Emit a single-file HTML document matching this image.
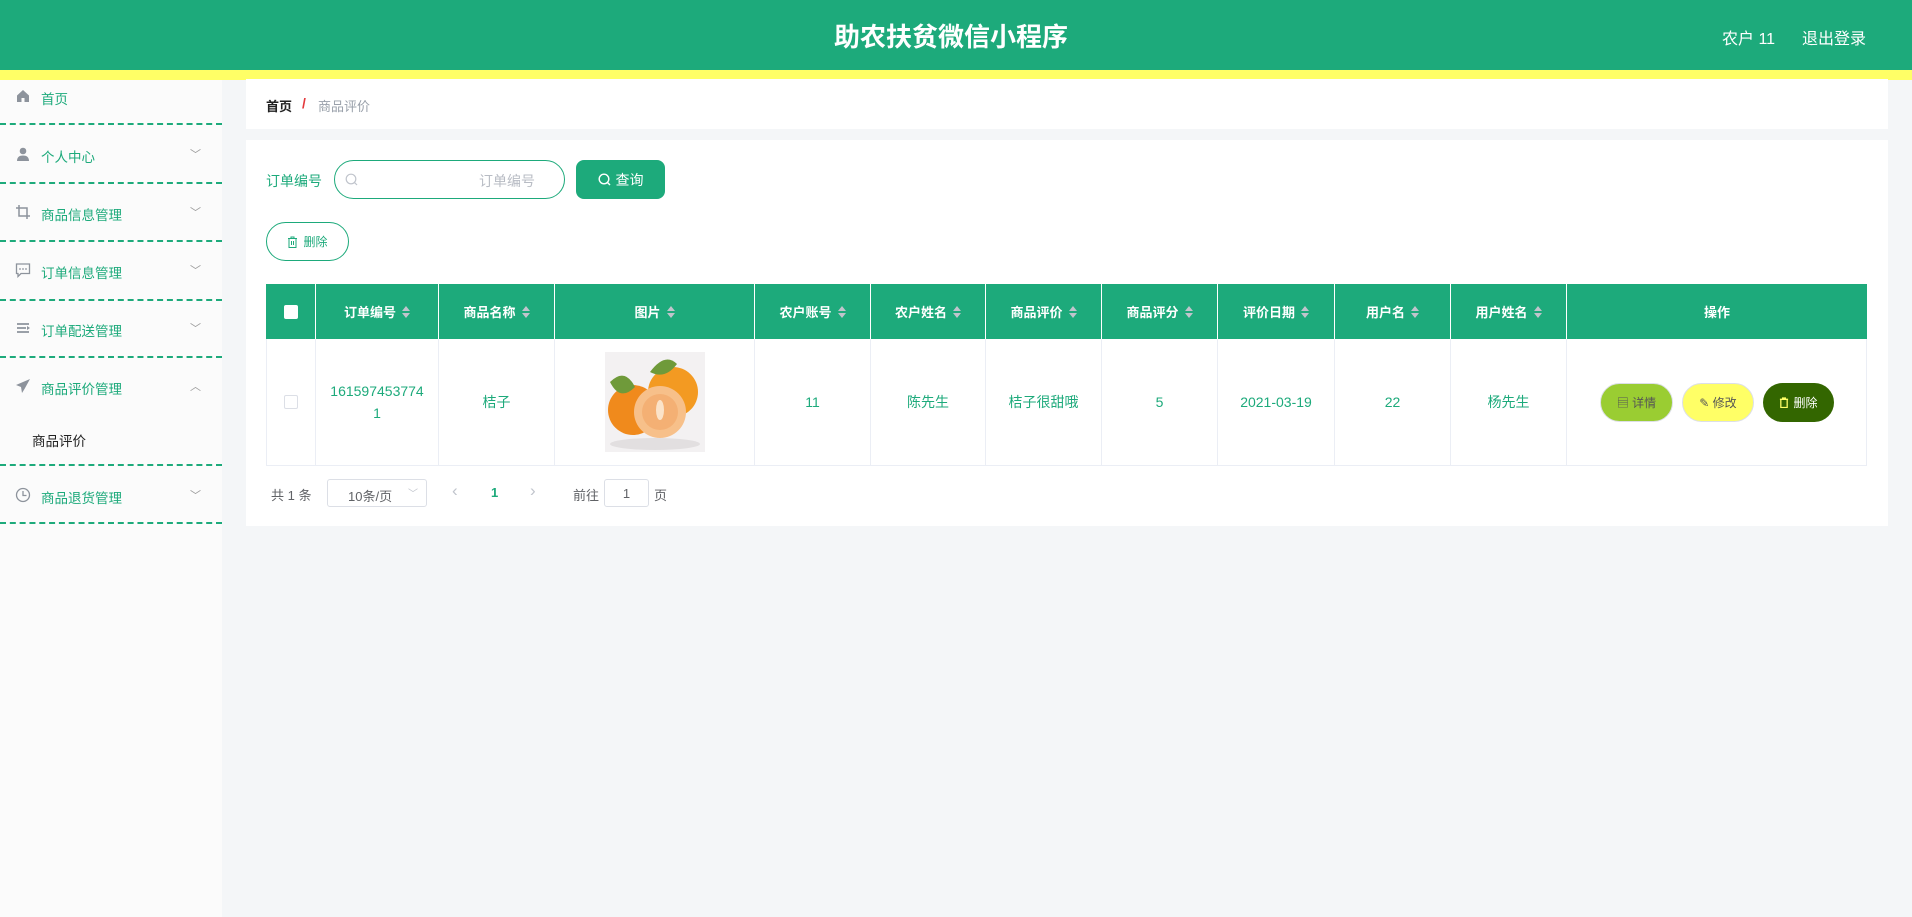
<!DOCTYPE html>
<html><head><meta charset="utf-8">
<style>
*{box-sizing:border-box;margin:0;padding:0}
body{width:1912px;height:917px;background:#f4f6f8;font-family:"Liberation Sans","Noto Sans CJK SC",sans-serif;position:relative;overflow:hidden}
.a{position:absolute}
.hdr{left:0;top:0;width:1912px;height:70px;background:#1daa7b}
.yl{left:0;top:70px;width:1912px;height:10px;background:#ffff66}
.side{left:0;top:80px;width:222px;height:837px;background:#fbfbfb}
.mi{position:absolute;left:0;width:222px;color:#1daa7b;font-size:13.5px}
.mi .t{position:absolute;left:41px}
.mi svg.ic{position:absolute;left:15px}
.mi .ch{position:absolute;left:190px;color:#999;font-size:11px}
.dl{position:absolute;left:0;width:222px;border-top:2px dashed #1daa7b}
.panel{background:#fff}
.th{position:absolute;top:284px;height:55px;background:#1daa7b;color:#fff;font-weight:bold;font-size:13px;display:flex;align-items:center;justify-content:center;border-right:1px solid #fff}
.td{position:absolute;top:339px;height:127px;border-right:1px solid #ebeef5;border-bottom:1px solid #ebeef5;display:flex;align-items:center;justify-content:center;color:#1daa7b;font-size:14px;text-align:center}
.sort{display:inline-block;margin-left:6px;width:8px;height:12px;position:relative}
.sort:before{content:"";position:absolute;left:0;top:0;border:4px solid transparent;border-bottom:5px solid #c0c4cc;border-top:0}
.sort:after{content:"";position:absolute;left:0;top:7px;border:4px solid transparent;border-top:5px solid #c0c4cc;border-bottom:0}
.btn{position:absolute;top:383px;height:39px;border-radius:20px;font-size:12px;display:flex;align-items:center;justify-content:center}
</style></head><body>
<div class="a hdr"></div>
<div class="a" style="left:0;top:17px;width:1902px;text-align:center;color:#fff;font-size:26px;font-weight:bold">助农扶贫微信小程序</div>
<div class="a" style="left:1722px;top:25px;color:#fff;font-size:16px">农户 11</div>
<div class="a" style="left:1802px;top:25px;color:#fff;font-size:16px">退出登录</div>
<div class="a yl"></div>
<div class="a side">
 <div class="mi" style="top:8px"><svg class="ic" width="16" height="16" viewBox="0 0 16 16"><path d="M8 2L2 7.5V14h4.5v-4h3v4H14V7.5z" fill="#8d939c"/></svg><span class="t">首页</span></div>
 <div class="dl" style="top:43px"></div>
 <div class="mi" style="top:66px"><svg class="ic" width="16" height="16" viewBox="0 0 16 16"><circle cx="8" cy="5" r="3.3" fill="#8d939c"/><path d="M2 15c0-4 2.5-5.5 6-5.5s6 1.5 6 5.5z" fill="#8d939c"/></svg><span class="t">个人中心</span><span class="ch">﹀</span></div>
 <div class="dl" style="top:102px"></div>
 <div class="mi" style="top:124px"><svg class="ic" width="16" height="16" viewBox="0 0 16 16"><path d="M4 1v11h11M1 4h11v11" fill="none" stroke="#8d939c" stroke-width="1.5"/></svg><span class="t">商品信息管理</span><span class="ch">﹀</span></div>
 <div class="dl" style="top:160px"></div>
 <div class="mi" style="top:182px"><svg class="ic" width="16" height="16" viewBox="0 0 16 16"><path d="M1.5 2h13v9.5H6L3 14.5v-3H1.5z" fill="none" stroke="#8d939c" stroke-width="1.3"/><circle cx="5" cy="7" r=".9" fill="#8d939c"/><circle cx="8" cy="7" r=".9" fill="#8d939c"/><circle cx="11" cy="7" r=".9" fill="#8d939c"/></svg><span class="t">订单信息管理</span><span class="ch">﹀</span></div>
 <div class="dl" style="top:219px"></div>
 <div class="mi" style="top:240px"><svg class="ic" width="16" height="16" viewBox="0 0 16 16"><path d="M2 4h12M2 8h9M2 12h12" stroke="#8d939c" stroke-width="1.8"/><path d="M12 6l3 2-3 2z" fill="#8d939c"/></svg><span class="t">订单配送管理</span><span class="ch">﹀</span></div>
 <div class="dl" style="top:276px"></div>
 <div class="mi" style="top:298px"><svg class="ic" width="16" height="16" viewBox="0 0 16 16"><path d="M15 1L1 7l5 2 1 6 2.5-4L15 1z" fill="#8d939c"/></svg><span class="t">商品评价管理</span><span class="ch">︿</span></div>
 <div class="mi" style="top:350px;color:#222"><span class="t" style="left:32px">商品评价</span></div>
 <div class="dl" style="top:384px"></div>
 <div class="mi" style="top:407px"><svg class="ic" width="16" height="16" viewBox="0 0 16 16"><circle cx="8" cy="8" r="6.5" fill="none" stroke="#8d939c" stroke-width="1.3"/><path d="M8 4v4.5h3.5" fill="none" stroke="#8d939c" stroke-width="1.3"/></svg><span class="t">商品退货管理</span><span class="ch">﹀</span></div>
 <div class="dl" style="top:442px"></div>
</div>

<div class="a panel" style="left:246px;top:79px;width:1642px;height:50px"></div>
<div class="a" style="left:266px;top:96px;font-size:13px;color:#222;font-weight:bold">首页</div>
<div class="a" style="left:302px;top:95px;font-size:14px;color:#e4393c;font-weight:bold">/</div>
<div class="a" style="left:318px;top:96px;font-size:13px;color:#99a0aa">商品评价</div>

<div class="a panel" style="left:246px;top:140px;width:1642px;height:386px"></div>
<div class="a" style="left:266px;top:171px;font-size:14px;color:#1daa7b">订单编号</div>
<div class="a" style="left:334px;top:160px;width:231px;height:39px;border:1px solid #1daa7b;border-radius:20px"></div>
<svg class="a" style="left:345px;top:173px" width="13" height="13" viewBox="0 0 13 13"><circle cx="6" cy="6" r="4.8" fill="none" stroke="#c0c4cc" stroke-width="1.2"/><path d="M9.5 9.5L12 12" stroke="#c0c4cc" stroke-width="1.2"/></svg>
<div class="a" style="left:479px;top:171px;font-size:14px;color:#b8bcc4">订单编号</div>
<div class="a" style="left:576px;top:160px;width:89px;height:39px;background:#1daa7b;border-radius:8px;color:#fff;font-size:14px;display:flex;align-items:center;justify-content:center"><svg width="13" height="13" viewBox="0 0 13 13" style="margin-right:5px"><circle cx="6" cy="6" r="4.8" fill="none" stroke="#fff" stroke-width="1.4"/><path d="M9.5 9.5L12 12" stroke="#fff" stroke-width="1.4"/></svg>查询</div>
<div class="a" style="left:266px;top:222px;width:83px;height:39px;border:1px solid #1daa7b;border-radius:20px;color:#1daa7b;font-size:12px;display:flex;align-items:center;justify-content:center"><svg width="11" height="12" viewBox="0 0 11 12" style="margin-right:5px"><path d="M1 2.5h9M4 2.5V1h3v1.5M2 2.5v9h7v-9M4.5 5v4M6.5 5v4" fill="none" stroke="#1daa7b" stroke-width="1"/></svg>删除</div>

<div class="th" style="left:266px;width:50px"><span style="width:14px;height:14px;background:#fff;border-radius:2px;display:block"></span></div>
<div class="th" style="left:316px;width:123px">订单编号<i class="sort"></i></div>
<div class="th" style="left:439px;width:116px">商品名称<i class="sort"></i></div>
<div class="th" style="left:555px;width:200px">图片<i class="sort"></i></div>
<div class="th" style="left:755px;width:116px">农户账号<i class="sort"></i></div>
<div class="th" style="left:871px;width:115px">农户姓名<i class="sort"></i></div>
<div class="th" style="left:986px;width:116px">商品评价<i class="sort"></i></div>
<div class="th" style="left:1102px;width:116px">商品评分<i class="sort"></i></div>
<div class="th" style="left:1218px;width:117px">评价日期<i class="sort"></i></div>
<div class="th" style="left:1335px;width:116px">用户名<i class="sort"></i></div>
<div class="th" style="left:1451px;width:116px">用户姓名<i class="sort"></i></div>
<div class="th" style="left:1567px;width:300px;border-right:0">操作</div>

<div class="td" style="left:266px;width:50px;border-left:1px solid #ebeef5"><span style="width:14px;height:14px;border:1px solid #dcdfe6;border-radius:2px;display:block"></span></div>
<div class="td" style="left:316px;width:123px;line-height:22px">161597453774<br>1</div>
<div class="td" style="left:439px;width:116px">桔子</div>
<div class="td" style="left:555px;width:200px">
<svg width="100" height="100" viewBox="0 0 100 100"><rect width="100" height="100" fill="#f3f1f2"/><ellipse cx="50" cy="92" rx="45" ry="6" fill="#e2dfe0"/><circle cx="28" cy="58" r="25" fill="#f08a1c"/><circle cx="68" cy="40" r="25" fill="#f39a22"/><path d="M5 30 Q20 15 30 35 Q15 50 5 30z" fill="#6f9a3a"/><path d="M45 20 Q60 0 72 12 Q60 28 45 20z" fill="#6f9a3a"/><circle cx="55" cy="60" r="26" fill="#f7c08a"/><circle cx="55" cy="60" r="18" fill="#f4b074"/><ellipse cx="55" cy="58" rx="4" ry="10" fill="#fbe3c9"/></svg></div>
<div class="td" style="left:755px;width:116px">11</div>
<div class="td" style="left:871px;width:115px">陈先生</div>
<div class="td" style="left:986px;width:116px">桔子很甜哦</div>
<div class="td" style="left:1102px;width:116px">5</div>
<div class="td" style="left:1218px;width:117px">2021-03-19</div>
<div class="td" style="left:1335px;width:116px">22</div>
<div class="td" style="left:1451px;width:116px">杨先生</div>
<div class="td" style="left:1567px;width:300px"></div>
<div class="btn" style="left:1600px;width:73px;background:#9acd32;color:#555;border:1px solid #dcdfe6">▤ 详情</div>
<div class="btn" style="left:1682px;width:72px;background:#ffff66;color:#555;border:1px solid #dcdfe6">✎ 修改</div>
<div class="btn" style="left:1763px;width:71px;background:#336600;color:#fff"><svg width="10" height="11" viewBox="0 0 11 12" style="margin-right:4px"><path d="M1 2.5h9M4 2.5V1h3v1.5M2 2.5v9h7v-9" fill="none" stroke="#ffff66" stroke-width="1.4"/></svg>删除</div>

<div class="a" style="left:271px;top:485px;font-size:13px;color:#606266">共 1 条</div>
<div class="a" style="left:327px;top:479px;width:100px;height:28px;border:1px solid #dcdfe6;border-radius:3px;font-size:13px;color:#606266;padding:6px 0 0 20px">10条/页<span style="position:absolute;right:8px;top:5px;color:#c0c4cc;font-size:10px">﹀</span></div>
<div class="a" style="left:452px;top:481px;font-size:17px;color:#c0c4cc">‹</div>
<div class="a" style="left:491px;top:485px;font-size:13px;color:#1daa7b;font-weight:bold">1</div>
<div class="a" style="left:530px;top:481px;font-size:17px;color:#c0c4cc">›</div>
<div class="a" style="left:573px;top:485px;font-size:13px;color:#606266">前往</div>
<div class="a" style="left:604px;top:479px;width:45px;height:28px;border:1px solid #dcdfe6;border-radius:3px;font-size:13px;color:#606266;text-align:center;padding-top:6px">1</div>
<div class="a" style="left:654px;top:485px;font-size:13px;color:#606266">页</div>
</body></html>
